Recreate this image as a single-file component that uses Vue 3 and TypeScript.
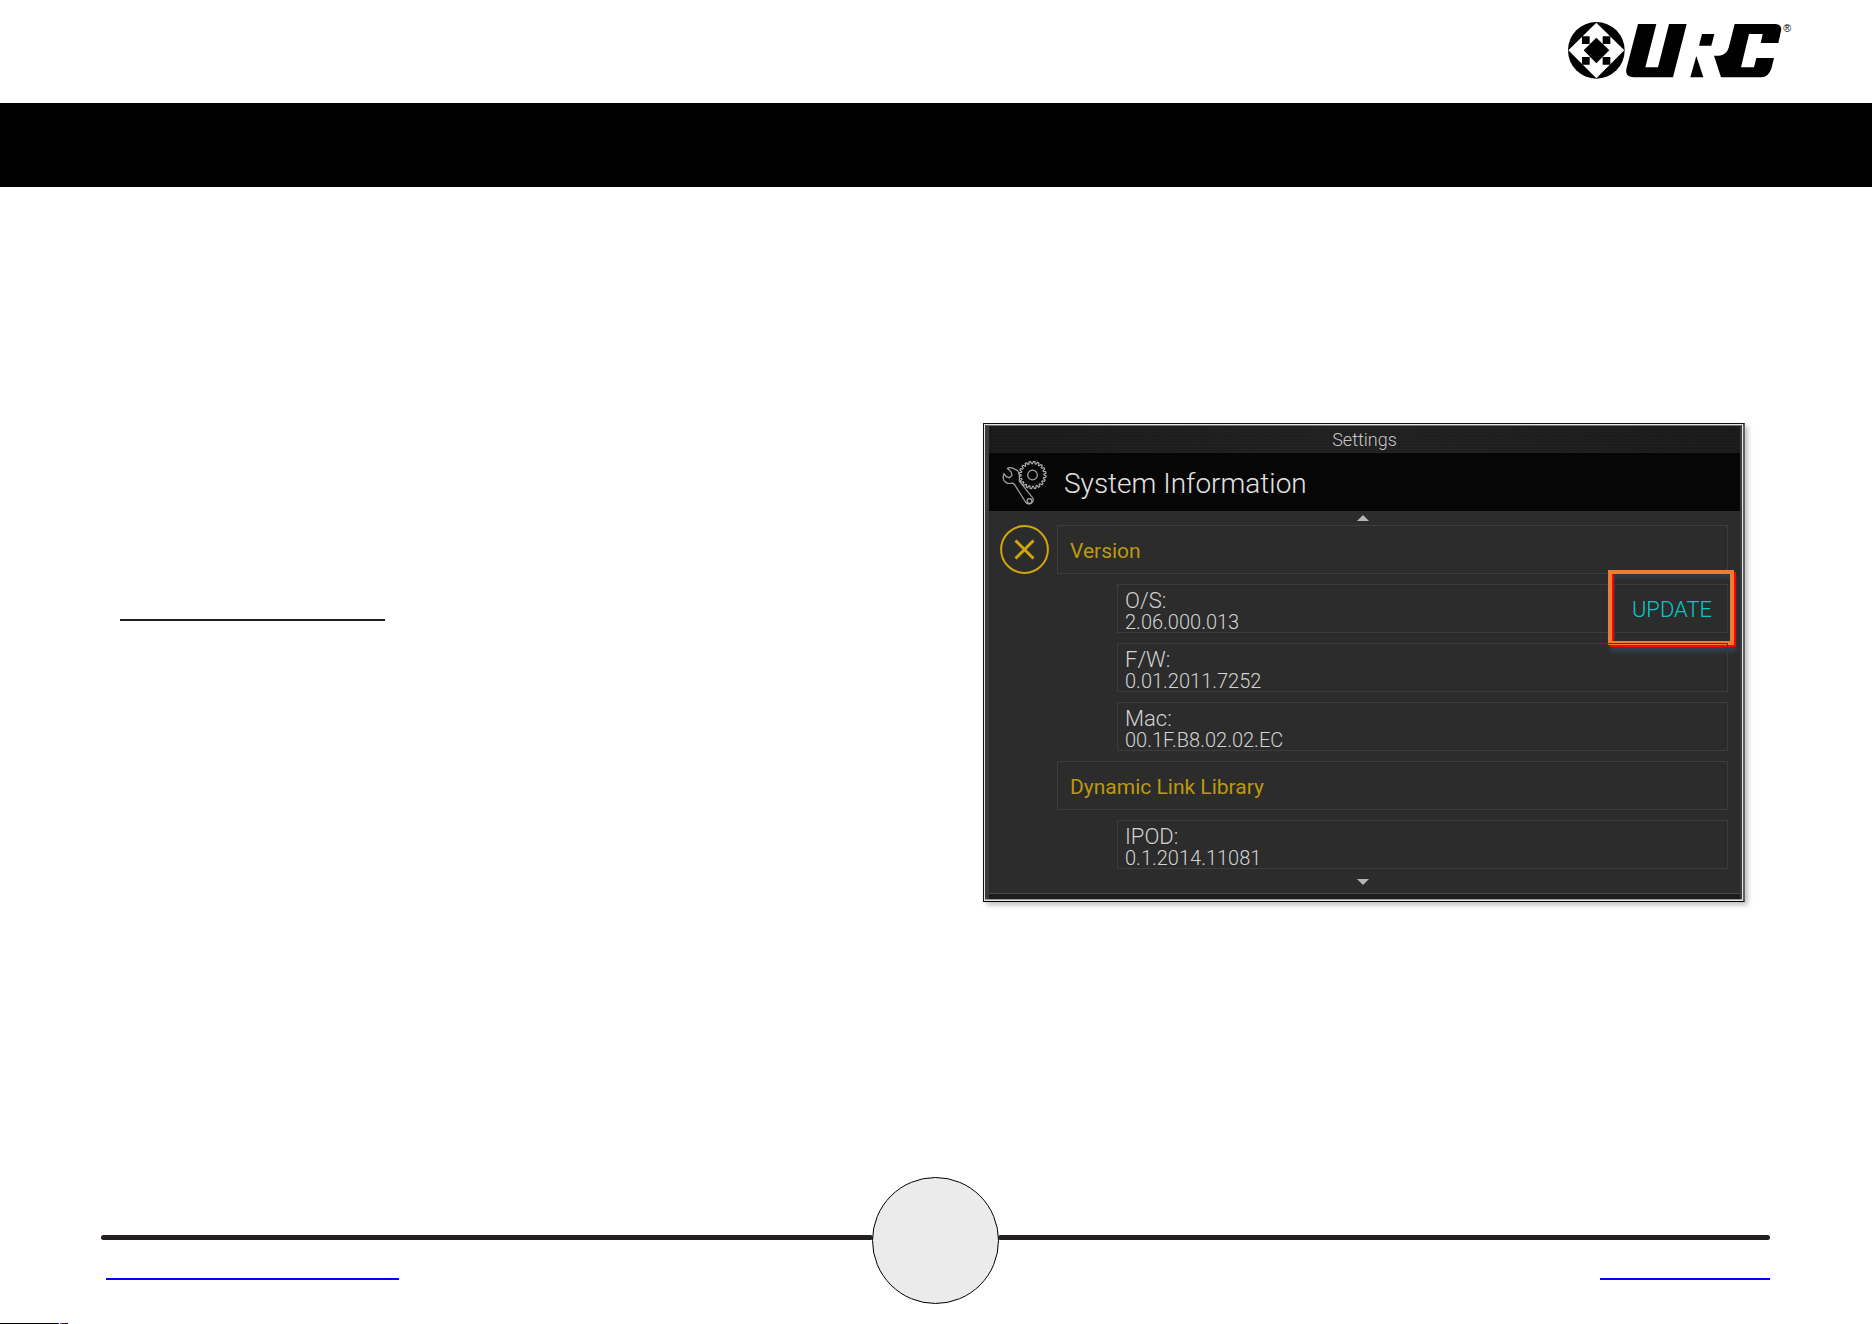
<script setup lang="ts">
interface Entry {
  label: string
  value: string
  updatable?: boolean
}

interface Group {
  title: string
  entries: Entry[]
}

const groups: Group[] = [
  {
    title: 'Version',
    entries: [
      { label: 'O/S:', value: '2.06.000.013', updatable: true },
      { label: 'F/W:', value: '0.01.2011.7252' },
      { label: 'Mac:', value: '00.1F.B8.02.02.EC' },
    ],
  },
  {
    title: 'Dynamic Link Library',
    entries: [{ label: 'IPOD:', value: '0.1.2014.11081' }],
  },
]

// Outline of a gear wheel: four points for every tooth
function gearPath(cx: number, cy: number, outer: number, inner: number, teeth: number): string {
  const points: string[] = []
  const step = (Math.PI * 2) / teeth
  for (let i = 0; i < teeth; i++) {
    const corners: [number, number][] = [
      [0, inner],
      [0.2, outer],
      [0.55, outer],
      [0.75, inner],
    ]
    for (const [offset, radius] of corners) {
      const angle = (i + offset) * step
      points.push(`${(cx + radius * Math.cos(angle)).toFixed(2)} ${(cy + radius * Math.sin(angle)).toFixed(2)}`)
    }
  }
  return `M${points.join('L')}Z`
}

const gear = gearPath(31.5, 14, 13.6, 11.4, 20)
</script>

<template>
  <div class="page">
    <header class="masthead">
      <svg class="logo" viewBox="84 66 672 174" aria-hidden="true">
        <circle cx="169" cy="151" r="85" />
        <path fill="#fff" d="M169 68L253 151L169 235L85 151Z" />
        <path d="M169 113L208 151L169 190L131 151Z" />
        <path d="M126 109h23v23h-23zM188 109h23v23h-23zM126 171h23v23h-23zM188 171h23v23h-23z" />
        <path d="M294 72H349L316 202H354L387 72H440L399 232H280Q254 230 259 207Z" />
        <path d="M486 102H523L514 137H477Z" />
        <path d="M469 168L490 232H451Z" />
        <path d="M584 72H706Q727 74 723 93L715 129H662L668 102H627L603 202H642L649 174H702L694 206Q686 230 664 232H543L522 167H537Q560 164 566 143Z" />
        <text x="730" y="95" font-size="32">®</text>
      </svg>
    </header>
    <div class="band"></div>

    <main class="content">
      <div class="notes"><span class="underline"></span></div>

      <section class="device">
        <div class="screen">
          <div class="topbar">Settings</div>
          <div class="titlebar">
            <svg class="tools" viewBox="0 0 46 46" aria-hidden="true">
              <path :d="gear" />
              <circle cx="31.5" cy="14" r="4.8" />
              <path class="wrench" d="M3 12.7Q.8 18 4 20.8Q7 23.4 11.5 22L13.5 23.5L25 41.7A4.3 4.3 0 0 0 32 37.2L18.3 20Q19.2 9 14 8.3Q10 5.6 6.5 7.4L10 10.7L11 14.3L8.3 16.7L5 15.4Z" />
              <circle cx="28.5" cy="40" r="2.4" />
            </svg>
            <h1>System Information</h1>
          </div>
          <div class="body">
            <div class="arrow"><svg viewBox="0 0 12 6"><path d="M6 0L12 6H0Z" /></svg></div>
            <div class="columns">
              <button class="close" type="button" aria-label="Close">
                <svg viewBox="0 0 49 49">
                  <circle cx="24.5" cy="24.5" r="23.4" />
                  <path d="M15.5 15.5L33.5 33.5M33.5 15.5L15.5 33.5" />
                </svg>
              </button>
              <div class="list">
                <template v-for="group in groups" :key="group.title">
                  <h2 class="group">{{ group.title }}</h2>
                  <div v-for="entry in group.entries" :key="entry.label" class="entry">
                    <div class="label">{{ entry.label }}</div>
                    <div class="value">{{ entry.value }}</div>
                    <button v-if="entry.updatable" class="update" type="button">UPDATE</button>
                  </div>
                </template>
              </div>
            </div>
            <div class="arrow down"><svg viewBox="0 0 12 6"><path d="M0 0H12L6 6Z" /></svg></div>
          </div>
        </div>
      </section>
    </main>

    <footer class="footer">
      <div class="divider">
        <span class="line"></span>
        <span class="badge"></span>
        <span class="line"></span>
      </div>
      <div class="links">
        <a class="link wide" href="#"></a>
        <a class="link" href="#"></a>
      </div>
      <div class="edge"></div>
    </footer>
  </div>
</template>

<style>
body {
  margin: 0;
  background: #fff;
}
</style>

<style scoped>
.page {
  display: flex;
  flex-direction: column;
  min-height: 100vh;
  font-family: Roboto, "Liberation Sans", sans-serif;
  font-weight: 300;
  color: #d2d2d2;
}

.masthead {
  display: flex;
  justify-content: flex-end;
  padding: 22px 80px 23px 0;
}

.logo {
  display: block;
  width: 224px;
  height: 58px;
  font-family: "Liberation Sans", sans-serif;
  font-weight: 400;
}

.band {
  height: 84px;
  background: #000;
}

.content {
  display: grid;
  grid-template-columns: minmax(0, 863fr) minmax(0, 762fr);
  align-items: start;
  flex: 1;
  padding: 236px 127px 0 120px;
}

.notes {
  padding-top: 196px;
}

.underline {
  display: block;
  width: 265px;
  height: 2px;
  background: #231f20;
}

.device {
  border: 1px solid #111;
  border-right: 2px solid #606060;
  border-bottom-color: #000;
  padding: 1px;
  background: #e4e4e4;
  box-shadow: 3px 3px 5px rgba(0, 0, 0, 0.25);
}

.screen {
  border: solid #3a3c3c;
  border-width: 1px 2px 0 4px;
  border-top-color: #6c7070;
  background: #1c1c1c;
  padding-bottom: 5px;
  box-shadow: 0 1px #999;
  margin-bottom: 1px;
}

.topbar {
  height: 27px;
  line-height: 28px;
  font-size: 18px;
  text-align: center;
  color: #c8c8c8;
  background:
    repeating-linear-gradient(90deg, rgba(255, 255, 255, 0.01) 0 1px, transparent 1px 3px),
    repeating-linear-gradient(0deg, rgba(255, 255, 255, 0.015) 0 1px, transparent 1px 3px),
    linear-gradient(90deg, #191919, #202020 50%, #191919);
}

.titlebar {
  box-sizing: border-box;
  display: flex;
  align-items: center;
  gap: 17px;
  height: 58px;
  padding: 3px 0 0 12px;
  background: #060606;
}

.tools {
  width: 46px;
  height: 46px;
  fill: none;
  stroke: #a8a8a8;
  stroke-width: 1.2;
}

.wrench {
  fill: #060606;
}

h1,
h2 {
  margin: 0;
  font-weight: 300;
}

h1 {
  font-size: 28px;
  line-height: 32px;
  color: #e2e2e2;
}

.body {
  background: #2c2c2c;
  border-bottom: 1px solid #484848;
}

.arrow {
  display: flex;
  justify-content: center;
  padding: 4px 3px 4px 0;
}

.arrow svg {
  width: 12px;
  height: 6px;
  fill: #b5b5b5;
}

.arrow.down {
  padding: 10px 3px 8px 0;
}

.columns {
  display: flex;
  align-items: flex-start;
  gap: 8px;
  padding: 0 12px 0 11px;
}

.close {
  width: 49px;
  height: 49px;
  padding: 0;
  border: 0;
  background: none;
}

.close svg {
  display: block;
  fill: none;
  stroke: #cfa60b;
  stroke-width: 2;
}

.close path {
  stroke-width: 3;
}

.list {
  display: flex;
  flex: 1;
  flex-direction: column;
  gap: 10px;
}

.group,
.entry {
  box-sizing: border-box;
  height: 49px;
  border: 1px solid #3c3c3c;
}

.group {
  padding-left: 12px;
  font-size: 21px;
  font-weight: 400;
  line-height: 50px;
  color: #bd990c;
}

.entry {
  position: relative;
  margin-left: 60px;
  padding: 5px 7px 0;
}

.label {
  font-size: 22px;
  line-height: 22px;
}

.value {
  font-size: 20px;
  line-height: 20px;
}

.update {
  position: absolute;
  top: -15px;
  right: -7px;
  width: 126px;
  height: 75px;
  padding: 3px 0 0 2px;
  border: 4px solid #ed7d31;
  background: none;
  box-shadow:
    2px 2px #f00,
    inset 2px 0 #f00,
    2px 7px 4px #33424f,
    inset 2px 4px 4px #2f3d49;
  font-family: inherit;
  font-size: 22px;
  font-weight: 300;
  color: #08c8c5;
}

.divider {
  display: flex;
  align-items: center;
  padding: 0 102px 0 101px;
}

.line {
  flex: 1;
  height: 5px;
  margin-bottom: 6px;
  border-radius: 3px;
  background: #231f20;
}

.badge {
  box-sizing: border-box;
  width: 127px;
  height: 127px;
  margin: 0 -1px;
  border: 1px solid #000;
  border-radius: 50%;
  background: #ebebeb;
  z-index: 1;
}

.links {
  display: flex;
  justify-content: space-between;
  margin-top: -26px;
  padding: 0 102px 43px 106px;
}

.link {
  width: 170px;
  height: 2px;
  background: #00f;
}

.link.wide {
  width: 293px;
}

.edge {
  width: 68px;
  height: 1px;
  background: linear-gradient(90deg, #000 0 58px, #22d 58px 59px, #fff 59px 60px, #a33 60px 62px, #225 62px 64px, #911 64px 65px, #003 65px);
}
</style>
